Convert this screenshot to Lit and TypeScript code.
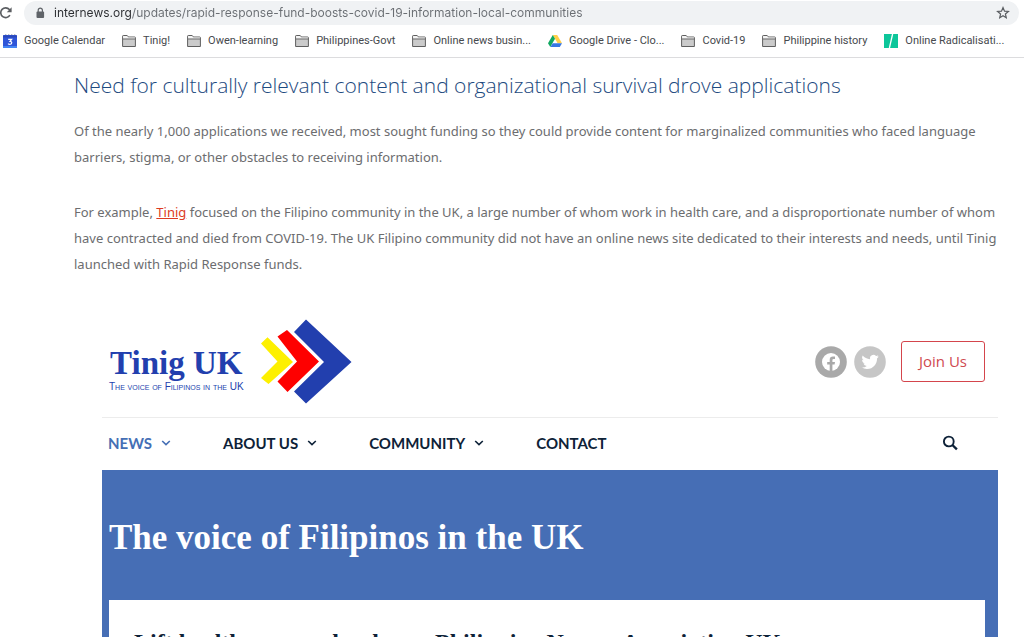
import { LitElement, html, css, svg, nothing } from "lit";
import { customElement } from "lit/decorators.js";

type BookmarkIcon = "calendar" | "folder" | "drive" | "hope";

const BOOKMARKS: { icon: BookmarkIcon; label: string }[] = [
  { icon: "calendar", label: "Google Calendar" },
  { icon: "folder", label: "Tinig!" },
  { icon: "folder", label: "Owen-learning" },
  { icon: "folder", label: "Philippines-Govt" },
  { icon: "folder", label: "Online news busin..." },
  { icon: "drive", label: "Google Drive - Clo..." },
  { icon: "folder", label: "Covid-19" },
  { icon: "folder", label: "Philippine history" },
  { icon: "hope", label: "Online Radicalisati..." },
];

const ICONS = {
  calendar: svg`
    <rect x="0" y="1" width="14" height="13" rx="1" fill="#2f55d8"/>
    <path d="M0 1.5h14v2H0z" fill="#2a48b8"/>
    <path d="M2 0.5h1.4M5 0.5h1.4M8 0.5h1.4M11 0.5h1.4" stroke="#b9bcc4"/>
    <path d="M5.2 5.4h3.4L7 7.3q1.8 0 1.8 1.5T6.9 10.4q-1.200 0-1.900-.7" fill="none" stroke="#fff" stroke-width="1.2"/>
    <path d="M0 12h14v1a1 1 0 0 1-1 1H1a1 1 0 0 1-1-1z" fill="#4285f4"/>`,
  folder: svg`
    <path d="M.6 12.5V2.2q0-.7.7-.7h3.9l1.2 1.5h6.3q.7 0 .7.7v8.8z" fill="#cbcbcb" stroke="#5f5f5f"/>
    <path d="M1.1 2h3.9l1.1 1.5h6.8v1.2H1.1z" fill="#f4f4f4"/>
    <path d="M1 5h12" stroke="#6b6b6b"/>`,
  drive: svg`
    <path d="M4.8 1h4.4L14 9.2H9.6z" fill="#ffcf48"/>
    <path d="M4.8 1 7 4.8 2.3 13 0 9.2z" fill="#11a861"/>
    <path d="M4.7 9.2H14L11.8 13H2.4z" fill="#3777e3"/>`,
  hope: svg`
    <path d="M0 0h14v14H0z" fill="#0cc69a"/>
    <path d="M8.6 0 5.4 14" stroke="#fff" stroke-width="1.3"/>`,
};

@customElement("browser-bar")
export class BrowserBar extends LitElement {
  static styles = css`
    :host {
      display: block;
      border-bottom: 1px solid #dcdcde;
      background: #fff;
      font-family: Inter, Roboto, sans-serif;
      color: #46494d;
    }
    button {
      display: flex;
      padding: 0;
      border: 0;
      background: none;
      color: inherit;
    }
    .toolbar {
      display: flex;
      align-items: center;
      gap: 10px;
      padding: 1px 5px 0 0;
    }
    .reload {
      width: 14px;
      justify-content: flex-start;
      overflow: hidden;
    }
    .address {
      display: flex;
      flex: 1;
      align-items: center;
      gap: 8px;
      height: 24px;
      padding: 0 9px 0 11px;
      border-radius: 12px;
      background: #f0f2f4;
    }
    .url {
      flex: 1;
      min-width: 0;
      padding: 0;
      border: 0;
      outline: 0;
      font: 12px/20px Inter, Roboto, sans-serif;
      color: transparent;
      background: linear-gradient(90deg, #2b2d31 78px, #6a6e73 78px);
      -webkit-background-clip: text;
      background-clip: text;
    }
    .bookmarks {
      display: flex;
      gap: 17px;
      height: 32px;
      padding: 0 0 0 3px;
      align-items: center;
      overflow: hidden;
    }
    .bookmark {
      display: flex;
      flex: none;
      align-items: center;
      gap: 7px;
      font: 11px/16px Roboto, sans-serif;
      color: inherit;
      text-decoration: none;
      white-space: nowrap;
    }
  `;

  render() {
    return html`
      <div class="toolbar">
        <button class="reload" aria-label="Reload">
          <svg width="14" height="14" viewBox="0 0 14 14" fill="none" stroke="#5b5e62" stroke-width="1.6">
            <path d="M9.9 9.2A4.9 4.9 0 1 1 9.4 3.6L10.6 5" />
            <path d="M11.6 1.2v5H6.8z" fill="#5b5e62" stroke="none" />
          </svg>
        </button>
        <div class="address">
          <svg width="11" height="12" viewBox="0 0 11 12" aria-hidden="true">
            <rect x="1.5" y="4.4" width="7.6" height="6.6" rx="1" fill="#5f6368" />
            <path d="M3.2 5V3.2a2.1 2.1 0 0 1 4.2 0V5" fill="none" stroke="#5f6368" stroke-width="1.2" />
          </svg>
          <input
            class="url"
            type="text"
            aria-label="Address"
            value="internews.org/updates/rapid-response-fund-boosts-covid-19-information-local-communities"
          />
          <button aria-label="Bookmark this page">
            <svg width="14" height="14" viewBox="0 0 14 14" fill="none" stroke="#5b5e62" stroke-width="1.2">
              <path d="M7 1.6 8.5 5.2l3.9.3-3 2.5.9 3.8L7 9.8l-3.3 2 .9-3.8-3-2.5 3.9-.3z" />
            </svg>
          </button>
        </div>
      </div>
      <nav class="bookmarks" aria-label="Bookmarks">
        ${BOOKMARKS.map(
          (b) => html`<a class="bookmark" href="#">
            <svg width="14" height="14" viewBox="0 0 14 14" aria-hidden="true">${ICONS[b.icon]}</svg>
            ${b.label}
          </a>`
        )}
      </nav>
    `;
  }
}

const MENU = [
  { label: "NEWS", sub: true, active: true },
  { label: "ABOUT US", sub: true, active: false },
  { label: "COMMUNITY", sub: true, active: false },
  { label: "CONTACT", sub: false, active: false },
];

@customElement("tinig-site")
export class TinigSite extends LitElement {
  static styles = css`
    :host {
      display: block;
      color: #0e2238;
    }
    a {
      color: inherit;
      text-decoration: none;
    }
    button {
      padding: 0;
      border: 0;
      background: none;
      display: flex;
    }
    .header {
      display: flex;
      align-items: center;
      justify-content: space-between;
      height: 111px;
      padding: 0 13px 0 7px;
      border-bottom: 1px solid #ececec;
    }
    .logo {
      display: flex;
      align-items: center;
      gap: 16px;
      color: #223fae;
    }
    .wordmark {
      display: flex;
      flex-direction: column;
      align-items: center;
      padding-top: 14px;
    }
    .name {
      font: bold 33px/36px "Liberation Serif", serif;
    }
    .tagline {
      font: 10px/12px "Liberation Sans", sans-serif;
      font-variant-caps: small-caps;
      white-space: nowrap;
    }
    .social {
      display: flex;
      align-items: center;
      gap: 7px;
    }
    .social svg {
      display: block;
    }
    .join {
      margin-left: 8px;
      padding: 0 17px;
      border: 1px solid #d4454c;
      border-radius: 3px;
      font: 15px/39px "Open Sans", sans-serif;
      color: #cf4a50;
    }
    .menu {
      display: flex;
      align-items: center;
      gap: 51px;
      height: 50px;
      padding: 0 40px 2px 6px;
      font: bold 15px/20px Lato, sans-serif;
    }
    .entry {
      display: flex;
      align-items: center;
      gap: 8px;
      white-space: nowrap;
    }
    .active {
      color: #456fb5;
    }
    .search {
      margin-left: auto;
    }
    .hero {
      padding: 45px 13px 0 7px;
      background: #466eb5;
    }
    .title {
      margin: 0;
      color: #fff;
      font: bold 35px/46px "Liberation Serif", serif;
    }
    .card {
      margin-top: 39px;
      padding: 27px 25px 40px;
      background: #fff;
    }
    .headline {
      margin: 0;
      font: bold 24px/30px "Liberation Serif", serif;
    }
  `;

  render() {
    return html`
      <header class="header">
        <a class="logo" href="#">
          <span class="wordmark">
            <span class="name">Tinig UK</span>
            <span class="tagline">The voice of Filipinos in the UK</span>
          </span>
          <svg width="92" height="86" viewBox="0 0 92 86" aria-hidden="true">
            <path d="M1 24.5 7.5 18.2 33 43 8.5 65 1 59 17.5 42.5z" fill="#fdf000" />
            <path d="M17 17 27.5 10.5 60.5 43 28 74 18 63.5 38 43z" fill="#fff" />
            <path d="M17.5 17.5 27 11 59 42.5 27.5 73 17.5 62.5 37 42.5z" fill="#fe0000" />
            <path d="M34 13 46 .5 91.500 43 46 84.5 34 72.5 64 43z" fill="#223fae" />
          </svg>
        </a>
        <div class="social">
          <a href="#" aria-label="Facebook">
            <svg width="32" height="32" viewBox="0 0 32 32">
              <circle cx="16" cy="16" r="15.8" fill="#a9a9a9" />
              <circle cx="16" cy="16" r="9" fill="#fff" />
              <path d="M14.7 25v-6.4h-2.5v-2.7h2.5v-2q0-3.3 3.3-3.3h2v2.3h-1.4q-1.2 0-1.2 1.2v1.8h2.6l-.4 2.7h-2.2V25z" fill="#a9a9a9" />
            </svg>
          </a>
          <a href="#" aria-label="Twitter">
            <svg width="32" height="32" viewBox="0 0 32 32">
              <circle cx="16" cy="16" r="15.8" fill="#c6c6c6" />
              <path
                transform="translate(7.5 7.3) scale(.72)"
                d="M23.95 4.57a10 10 0 0 1-2.82.77 4.96 4.96 0 0 0 2.16-2.72c-.95.55-2 .95-3.12 1.18a4.92 4.92 0 0 0-8.38 4.48C7.69 8.09 4.07 6.13 1.64 3.16a4.9 4.9 0 0 0 1.52 6.57 4.9 4.9 0 0 1-2.23-.61v.06a4.92 4.92 0 0 0 3.95 4.83 5 5 0 0 1-2.21.08 4.94 4.94 0 0 0 4.6 3.42A9.87 9.87 0 0 1 0 19.54a14 14 0 0 0 7.55 2.21c9.05 0 14-7.5 14-13.98 0-.21 0-.42-.02-.63a9.94 9.94 0 0 0 2.46-2.55z"
                fill="#fff"
              />
            </svg>
          </a>
          <a class="join" href="#">Join Us</a>
        </div>
      </header>
      <nav class="menu" aria-label="Sections">
        ${MENU.map(
          (m) => html`<a class="entry ${m.active ? "active" : ""}" href="#">
            ${m.label}
            ${m.sub
              ? html`<svg width="12" height="8" viewBox="0 0 12 8" fill="none" stroke="currentColor" stroke-width="1.6" aria-hidden="true">
                  <path d="M2.2 2 6 5.6 9.8 2" />
                </svg>`
              : nothing}
          </a>`
        )}
        <button class="search" aria-label="Search">
          <svg width="16" height="16" viewBox="0 0 16 16" fill="none" stroke="#0e2238">
            <circle cx="6.8" cy="6.5" r="4.9" stroke-width="1.9" />
            <path d="M10.4 10 14.9 14.4" stroke-width="2.3" />
          </svg>
        </button>
      </nav>
      <section class="hero">
        <h2 class="title">The voice of Filipinos in the UK</h2>
        <article class="card">
          <h3 class="headline">Lift healthcare worker ban – Philippine Nurses Association UK</h3>
        </article>
      </section>
    `;
  }
}

@customElement("app-root")
export class AppRoot extends LitElement {
  static styles = css`
    :host {
      display: block;
      height: 100vh;
      overflow: hidden;
      background: #fff;
    }
    .article {
      padding: 10px 14px 0 74px;
      font: 13px/26px "Noto Sans", sans-serif;
      color: #6c6d6f;
    }
    .heading {
      margin: 0 0 16px;
      font: 300 21px/34px "Open Sans", sans-serif;
      color: #1d4a80;
    }
    .text {
      margin: 0 0 29px;
    }
    .link {
      color: #dc3a22;
    }
    .figure {
      display: block;
      margin: 0 12px 0 28px;
    }
  `;

  render() {
    return html`
      <browser-bar></browser-bar>
      <main class="article">
        <h1 class="heading">Need for culturally relevant content and organizational survival drove applications</h1>
        <p class="text">
          Of the nearly 1,000 applications we received, most sought funding so they could provide content for
          marginalized communities who faced language barriers, stigma, or other obstacles to receiving information.
        </p>
        <p class="text">
          For example, <a class="link" href="#">Tinig</a> focused on the Filipino community in the UK, a large number of
          whom work in health care, and a disproportionate number of whom have contracted and died from COVID-19. The UK
          Filipino community did not have an online news site dedicated to their interests and needs, until Tinig
          launched with Rapid Response funds.
        </p>
        <tinig-site class="figure"></tinig-site>
      </main>
    `;
  }
}
